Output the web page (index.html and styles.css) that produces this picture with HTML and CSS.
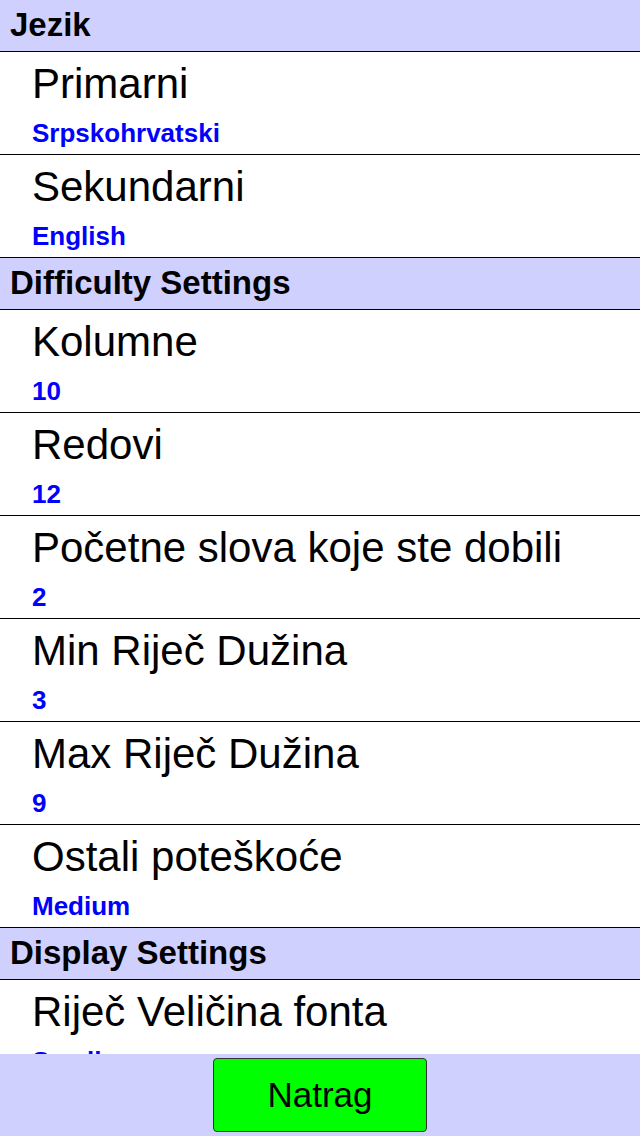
FILE: index.html
```html
<!DOCTYPE html>
<html lang="sr">
<head>
<meta charset="UTF-8">
<meta name="viewport" content="width=device-width, initial-scale=1.0">
<title>Postavke</title>
<link rel="stylesheet" href="styles.css">
</head>
<body>

<div class="settings">
  <div class="group-title">Jezik</div>
  <div class="item">
    <div class="item-title">Primarni</div>
    <div class="item-value">Srpskohrvatski</div>
  </div>
  <div class="item">
    <div class="item-title">Sekundarni</div>
    <div class="item-value">English</div>
  </div>

  <div class="group-title">Difficulty Settings</div>
  <div class="item">
    <div class="item-title">Kolumne</div>
    <div class="item-value">10</div>
  </div>
  <div class="item">
    <div class="item-title">Redovi</div>
    <div class="item-value">12</div>
  </div>
  <div class="item">
    <div class="item-title">Početne slova koje ste dobili</div>
    <div class="item-value">2</div>
  </div>
  <div class="item">
    <div class="item-title">Min Riječ Dužina</div>
    <div class="item-value">3</div>
  </div>
  <div class="item">
    <div class="item-title">Max Riječ Dužina</div>
    <div class="item-value">9</div>
  </div>
  <div class="item">
    <div class="item-title">Ostali poteškoće</div>
    <div class="item-value">Medium</div>
  </div>

  <div class="group-title">Display Settings</div>
  <div class="item">
    <div class="item-title">Riječ Veličina fonta</div>
    <div class="item-value">Small</div>
  </div>
</div>

<div class="footer">
  <button class="back-btn" type="button">Natrag</button>
</div>

</body>
</html>
```

FILE: styles.css
```css
body {
  font-family: "Liberation Sans", Arial, sans-serif;
  margin: 0;
  padding: 0;
  background-color: #fff;
  color: #000;
  height: 1136px;
  overflow: hidden;
}

.settings {
  height: 1054px;
  overflow: hidden;
}

.group-title {
  height: 51px;
  line-height: 50px;
  padding-left: 10px;
  background-color: #d0d0ff;
  border-bottom: 1px solid #000;
  font-size: 33px;
  font-weight: bold;
}

.item {
  height: 102px;
  border-bottom: 1px solid #000;
  padding-left: 32px;
}

.item-title {
  font-size: 42px;
  line-height: 44px;
  padding-top: 10px;
}

.item-value {
  font-size: 26px;
  font-weight: bold;
  line-height: 30px;
  padding-top: 12px;
  color: #0000ff;
}

/* Bottom bar with the back button */
.footer {
  height: 82px;
  background-color: #d0d0ff;
  display: flex;
  justify-content: center;
  align-items: flex-start;
  padding-top: 4px;
  box-sizing: border-box;
}

.back-btn {
  width: 214px;
  height: 74px;
  background-color: #00ff00;
  border: 1px solid #333;
  border-radius: 4px;
  font-family: "Liberation Sans", Arial, sans-serif;
  font-size: 35px;
  color: #000;
  cursor: pointer;
}
```
